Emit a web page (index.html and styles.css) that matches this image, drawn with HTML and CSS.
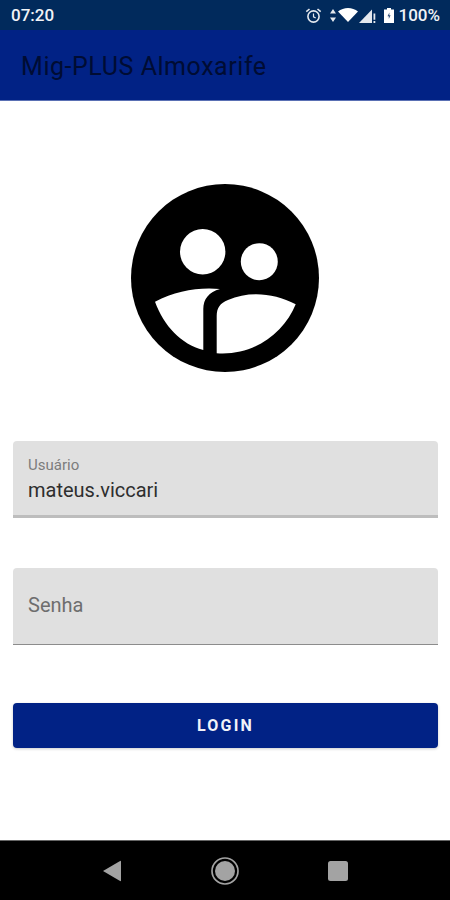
FILE: index.html
```html
<!DOCTYPE html>
<html lang="en">
<head>
  <meta charset="UTF-8" />
  <meta name="viewport" content="width=device-width, initial-scale=1.0"/>
  <title>Mig-PLUS Almoxarife</title>
  <link rel="stylesheet" href="styles.css">
</head>
<body>
  <div class="status-bar">
    <span class="clock">07:20</span>
    <div class="status-icons">
      <svg class="ic-alarm" width="17" height="17" viewBox="0 0 17 17">
        <circle cx="8.5" cy="9.5" r="5.6" fill="none" stroke="#e4e8ee" stroke-width="1.6"/>
        <path d="M8.5 6.5v3.3l2.2 1.3" fill="none" stroke="#e4e8ee" stroke-width="1.2"/>
        <path d="M1.3 4.6 4.5 2M15.7 4.6 12.5 2" fill="none" stroke="#e4e8ee" stroke-width="1.6"/>
      </svg>
      <svg class="ic-data" width="6" height="13" viewBox="0 0 6 13">
        <path d="M3 0 6 4.5H0ZM3 13 0 8.5H6Z" fill="#e4e8ee"/>
      </svg>
      <svg class="ic-wifi" width="20" height="14" viewBox="0 0 20 14">
        <path d="M0 3.6C5.500-1.200 14.500-1.200 20 3.600L10 14Z" fill="#fff"/>
      </svg>
      <svg class="ic-signal" width="18" height="15" viewBox="0 0 18 15">
        <path d="M0 15 13 1.500V15Z" fill="#e4e8ee"/>
        <path d="M14.500 5.500h1.800v6.200h-1.800ZM14.500 13h1.800v2h-1.800Z" fill="#e4e8ee"/>
      </svg>
      <svg class="ic-battery" width="10" height="15" viewBox="0 0 10 15">
        <path d="M3 0h4v1.500h3V15H0V1.500h3Z" fill="#fff"/>
        <path d="M5.400 4.500 3.500 8.300h1.300V11l1.800-3.700H5.300Z" fill="#33507a"/>
      </svg>
      <span class="battery-text">100%</span>
    </div>
  </div>

  <header class="app-bar">Mig-PLUS Almoxarife</header>

  <main class="content">
    <svg class="logo" width="188" height="188" viewBox="131 184 188 188">
      <circle cx="225" cy="278" r="94" fill="#000"/>
      <circle cx="202.700" cy="251.700" r="22.700" fill="#fff"/>
      <circle cx="259.300" cy="261.700" r="18.500" fill="#fff"/>
      <path d="M155 301.700C176 291 198 287 220 289C209 292 203.300 299 203.300 309V350C181 344 164 326 155 301.700Z" fill="#fff"/>
      <path d="M216.700 353.300V316C216.700 308 220 303 228 300C249 291 274 293 295.700 304.300C284 333 254 356 216.700 353.300Z" fill="#fff"/>
    </svg>

    <form class="login-form">
      <div class="field field-filled">
        <label class="field-label">Usuário</label>
        <span class="field-value">mateus.viccari</span>
      </div>
      <div class="field field-empty">
        <span class="field-placeholder">Senha</span>
      </div>
      <button type="button" class="login-btn">LOGIN</button>
    </form>
  </main>

  <nav class="nav-bar">
    <svg width="20" height="22" viewBox="0 0 20 22">
      <path d="M19 1.500V20.500a.6.6 0 0 1-.9.500L1 11 18.100 1a.6.6 0 0 1 .9.500Z" fill="#a3a3a3"/>
    </svg>
    <svg width="28" height="28" viewBox="0 0 28 28">
      <circle cx="14" cy="14" r="13" fill="none" stroke="#a3a3a3" stroke-width="1.700"/>
      <circle cx="14" cy="14" r="10" fill="#a3a3a3"/>
    </svg>
    <svg width="20" height="20" viewBox="0 0 20 20">
      <rect width="20" height="20" rx="2.500" fill="#a3a3a3"/>
    </svg>
  </nav>
</body>
</html>
```

FILE: styles.css
```css
* {
  box-sizing: border-box;
}

body {
  margin: 0;
  height: 900px;
  display: flex;
  flex-direction: column;
  font-family: 'Roboto', sans-serif;
  background-color: white;
  overflow: hidden;
}

.status-bar {
  height: 30px;
  padding: 0 10px 0 11px;
  display: flex;
  align-items: center;
  justify-content: space-between;
  background-color: #012a5c;
  color: #f1f3f6;
  font-size: 17px;
  font-weight: 500;
}

.status-icons {
  display: flex;
  align-items: center;
}

.ic-alarm {
  margin-right: 8px;
}

.ic-data {
  margin-right: 2px;
}

.ic-wifi {
  margin-right: 1px;
}

.ic-signal {
  margin-right: 7px;
}

.ic-battery {
  margin-right: 4px;
}

.app-bar {
  height: 71px;
  padding: 3px 21px 0;
  display: flex;
  align-items: center;
  background-color: #012285;
  border-bottom: 1px solid #5a70b4;
  color: #000c33;
  font-size: 25px;
  font-weight: 400;
  letter-spacing: 0.550px;
}

.content {
  flex: 1;
  padding: 83px 12px 0 13px;
  display: flex;
  flex-direction: column;
  align-items: center;
}

.logo {
  flex-shrink: 0;
  margin-right: 1px;
}

.login-form {
  width: 100%;
  margin-top: 69px;
  display: flex;
  flex-direction: column;
}

.field {
  height: 77px;
  padding: 0 15px;
  display: flex;
  flex-direction: column;
  background-color: #e0e0e0;
  border-radius: 4px 4px 0 0;
}

.field-filled {
  padding-top: 15px;
  border-bottom: 3px solid #bdbdbd;
}

.field-empty {
  margin-top: 50px;
  justify-content: center;
  padding-bottom: 2px;
  border-bottom: 1px solid #8c8c8c;
}

.field-label {
  font-size: 15px;
  line-height: 18px;
  color: #7c7c7c;
}

.field-value {
  margin-top: 4px;
  font-size: 20px;
  line-height: 24px;
  color: #2e2e2e;
}

.field-placeholder {
  font-size: 20px;
  color: #6e6e6e;
}

.login-btn {
  height: 45px;
  margin-top: 58px;
  border: none;
  border-radius: 4px;
  background-color: #012285;
  color: #f2f3f8;
  font-family: 'Roboto', sans-serif;
  font-size: 16px;
  font-weight: 700;
  letter-spacing: 2.200px;
  box-shadow: 0 1px 3px rgba(0,0,0,0.2);
}

.nav-bar {
  height: 60px;
  padding: 0 102px;
  display: flex;
  align-items: center;
  justify-content: space-between;
  background-color: black;
  border-top: 1px solid #666;
}
```
